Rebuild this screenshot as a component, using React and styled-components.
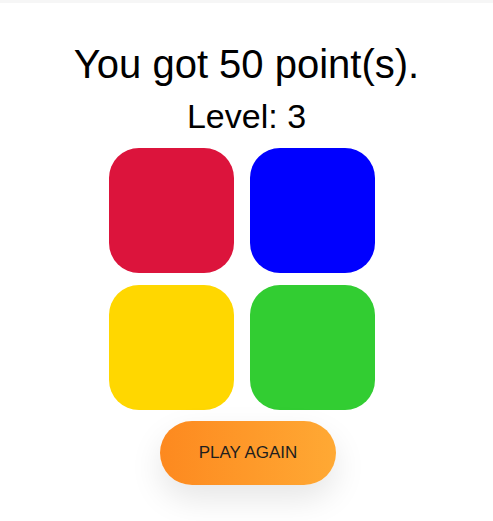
import React from "react";
import styled, { createGlobalStyle } from "styled-components";

const Global = createGlobalStyle`
  html, body { margin: 0; padding: 0; background: #ffffff; }
  body { font-family: "Liberation Sans", Arial, sans-serif; color: #000; }
`;

const TopStrip = styled.div`
  height: 3px;
  background: #f6f6f6;
`;

const Page = styled.main`
  display: flex;
  flex-direction: column;
  align-items: center;
  padding: 38px 0 36px;
`;

const Title = styled.h1`
  margin: 0;
  font-size: 40px;
  font-weight: 400;
  line-height: 46px;
`;

const Level = styled.h2`
  margin: 10px 0 0;
  font-size: 34px;
  font-weight: 400;
  line-height: 39px;
`;

const Board = styled.div`
  display: grid;
  grid-template-columns: repeat(2, 125px);
  grid-auto-rows: 125px;
  column-gap: 16px;
  row-gap: 12px;
  margin-top: 12px;
  padding-right: 10px;
`;

const Pad = styled.button`
  border: none;
  padding: 0;
  border-radius: 30px;
  background: ${(p) => p.$color};
  cursor: pointer;
`;

const PlayButton = styled.button`
  margin-top: 11px;
  margin-left: 3px;
  width: 176px;
  height: 64px;
  border: none;
  border-radius: 32px;
  background: linear-gradient(to right, #fd891f, #ffa934);
  box-shadow: 0 14px 32px rgba(0, 0, 0, 0.1);
  font-family: "Liberation Sans", Arial, sans-serif;
  font-size: 17px;
  color: #1e1e1e;
  text-transform: uppercase;
  cursor: pointer;
`;

const colors = ["#dc143c", "#0000ff", "#ffd700", "#32cd32"];

export default function App() {
  return (
    <>
      <Global />
      <TopStrip />
      <Page>
        <Title>You got 50 point(s).</Title>
        <Level>Level: 3</Level>
        <Board>
          {colors.map((c) => (
            <Pad key={c} $color={c} aria-label={c} />
          ))}
        </Board>
        <PlayButton>Play again</PlayButton>
      </Page>
    </>
  );
}
